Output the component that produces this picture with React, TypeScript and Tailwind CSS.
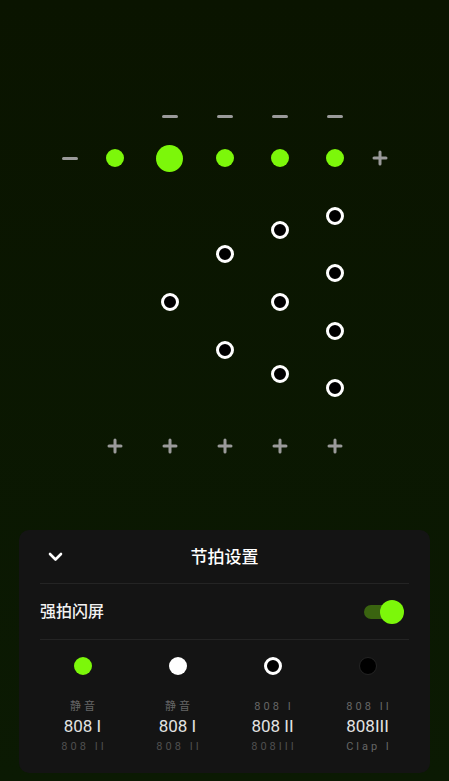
import React from 'react'

const font = { fontFamily: 'Roboto, "Noto Sans CJK SC", sans-serif' }

const columns = [
  { top: false, big: false, rings: 0 },
  { top: true, big: true, rings: 1 },
  { top: true, big: false, rings: 2 },
  { top: true, big: false, rings: 3 },
  { top: true, big: false, rings: 4 },
]

const sounds = [
  { icon: 'green', above: '静音', main: '808 I', below: '808 II' },
  { icon: 'white', above: '静音', main: '808 I', below: '808 II' },
  { icon: 'ring', above: '808 I', main: '808 II', below: '808III' },
  { icon: 'black', above: '808 II', main: '808III', below: 'Clap I' },
]

function Minus() {
  return <div className="w-4 h-[3px] rounded-full bg-[#9a9a9a]" />
}

function Plus() {
  return (
    <svg width="16" height="16" viewBox="0 0 16 16">
      <path d="M2 8h12M8 2v12" stroke="#9a9a9a" strokeWidth="3" strokeLinecap="round" />
    </svg>
  )
}

function Ring() {
  return <div className="w-[18px] h-[18px] rounded-full border-[3px] border-white bg-black" />
}

// zero height holder, child is centred on the line
function Pin({ children }: { children: React.ReactNode }) {
  return <div className="h-0 flex items-center justify-center">{children}</div>
}

function SoundIcon({ kind }: { kind: string }) {
  if (kind === 'green') return <div className="w-[18px] h-[18px] rounded-full bg-[#7cf70a]" />
  if (kind === 'white') return <div className="w-[18px] h-[18px] rounded-full bg-white" />
  if (kind === 'ring') return <div className="w-[18px] h-[18px] rounded-full border-[3px] border-white bg-black" />
  return <div className="w-[18px] h-[18px] rounded-full bg-black border border-[#242424]" />
}

export default function App() {
  return (
    <div
      className="w-[449px] h-[781px] flex flex-col bg-gradient-to-b from-[#0a1400] to-[#0b1a03] overflow-hidden"
      style={font}
    >
      {/* beat grid */}
      <div className="flex flex-col pt-[116px]">
        <div className="flex justify-center">
          <div className="w-[35px]" />
          {columns.map((c, i) => (
            <div key={i} className="w-[55px]">
              <Pin>{c.top ? <Minus /> : null}</Pin>
            </div>
          ))}
          <div className="w-[35px]" />
        </div>

        <div className="flex justify-center mt-[42px]">
          <div className="w-[35px] h-[288px] flex flex-col">
            <Pin>
              <Minus />
            </Pin>
          </div>
          {columns.map((c, i) => (
            <div key={i} className="w-[55px] h-[288px] flex flex-col justify-between">
              <Pin>
                {c.big ? (
                  <div className="w-[27px] h-[27px] rounded-full bg-[#7cf70a]" />
                ) : (
                  <div className="w-[18px] h-[18px] rounded-full bg-[#7cf70a]" />
                )}
              </Pin>
              {Array.from({ length: c.rings }).map((_, j) => (
                <Pin key={j}>
                  <Ring />
                </Pin>
              ))}
              <Pin>
                <Plus />
              </Pin>
            </div>
          ))}
          <div className="w-[35px] h-[288px] flex flex-col">
            <Pin>
              <Plus />
            </Pin>
          </div>
        </div>
      </div>

      {/* settings sheet */}
      <div className="mt-auto mb-[8px] mx-[19px] h-[243px] rounded-[10px] bg-[#141414] px-[21px] flex flex-col">
        <div className="h-[53px] grid grid-cols-[1fr_auto_1fr] items-center">
          <div className="pl-[8px] flex items-center">
            <svg width="15" height="10" viewBox="0 0 15 10">
              <path d="M2 2l5.5 5.5L13 2" fill="none" stroke="#ffffff" strokeWidth="2.6" strokeLinecap="round" strokeLinejoin="round" />
            </svg>
          </div>
          <div className="text-[17px] font-medium text-white leading-none pt-[1px]">节拍设置</div>
          <div />
        </div>
        <div className="h-px bg-[#242424]" />

        <div className="h-[55px] flex items-center justify-between">
          <div className="text-[16px] font-medium text-[#f2f2f2]">强拍闪屏</div>
          <div className="relative w-[40px] h-6 mr-[5px]">
            <div className="absolute left-0 top-[5px] w-[30px] h-[14px] rounded-full bg-[#3a6410]" />
            <div className="absolute right-0 top-0 w-6 h-6 rounded-full bg-[#7cf70a]" />
          </div>
        </div>
        <div className="h-px bg-[#242424]" />

        <div className="w-[380px] -mx-[5px] grid grid-cols-4 pt-[17px]">
          {sounds.map((s, i) => (
            <div key={i} className="flex flex-col items-center">
              <SoundIcon kind={s.icon} />
              <div className="mt-[25px] h-[14px] leading-[14px] text-[11px] tracking-[3px] text-[#666666] pl-[3px]">
                {s.above}
              </div>
              <div className="mt-[2px] h-[20px] leading-[20px] text-[17px] text-[#e2e2e2]">{s.main}</div>
              <div
                className={
                  'mt-[4px] h-[14px] leading-[14px] text-[11px] tracking-[3px] pl-[3px] ' +
                  (i === 3 ? 'text-[#666666]' : 'text-[#4f4f4f]')
                }
              >
                {s.below}
              </div>
            </div>
          ))}
        </div>
      </div>
    </div>
  )
}
